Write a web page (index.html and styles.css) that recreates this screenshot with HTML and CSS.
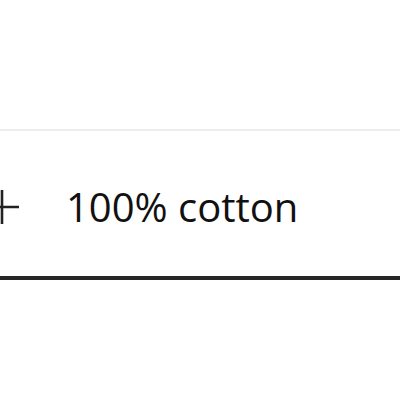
FILE: index.html
```html
<!DOCTYPE html>
<html>
<head>
<meta charset="utf-8">
<link rel="stylesheet" href="styles.css">
</head>
<body>
<div class="panel">
  <div class="row">
    <svg class="plus" width="34" height="36" viewBox="0 0 34 36">
      <path d="M17 1V35M0 18H34" stroke="#222" stroke-width="2.6" fill="none"/>
    </svg>
    <span class="label">100% cotton</span>
  </div>
</div>
</body>
</html>
```
FILE: styles.css
```css
html, body {
  margin: 0;
  padding: 0;
  background: #fff;
  overflow: hidden;
}
.panel {
  margin-top: 129px;
  height: 145px;
  border-top: 2px solid #ececec;
  border-bottom: 4px solid #262626;
  display: flex;
  align-items: center;
}
.row {
  display: flex;
  align-items: center;
  gap: 47px;
  margin-left: -15px;
  padding-top: 6px;
}
.plus {
  display: block;
  flex: none;
}
.label {
  font-family: "Open Sans", "Noto Sans", sans-serif;
  font-size: 40px;
  color: #111;
  line-height: 1;
}
```
